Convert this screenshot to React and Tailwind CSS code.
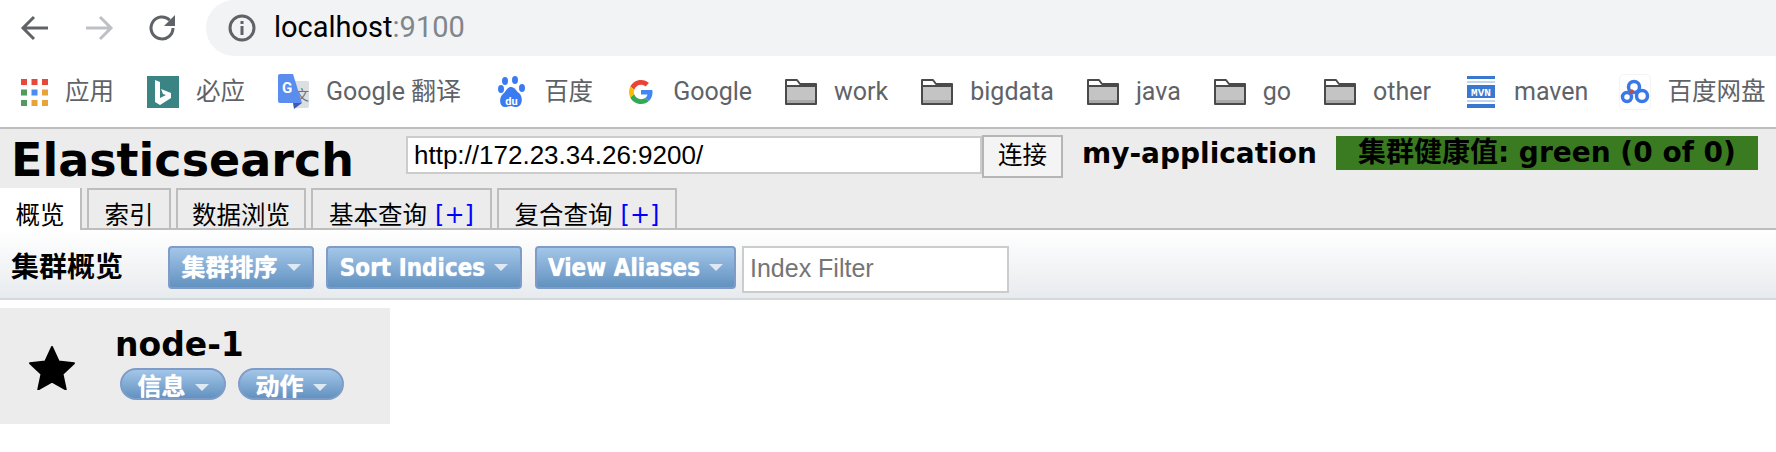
import React from 'react';

const chromeFont = 'font-["Roboto","Noto_Sans_CJK_SC",sans-serif]';
const pageFont = 'font-["Liberation_Sans","Noto_Sans_CJK_SC",sans-serif]';
const boldFont = 'font-["DejaVu_Sans","Noto_Sans_CJK_SC",sans-serif] font-bold';
const buttonFont = 'font-["DejaVu_Sans_Condensed","Noto_Sans_CJK_SC",sans-serif] font-bold';

const Folder = () => (
    <svg width="32" height="28" viewBox="0 0 32 28">
        <path d="M1 26V2h11l3 4h16v20z" fill="#fff" stroke="#4a4a4a" strokeWidth="2" strokeLinejoin="round" />
        <rect x="2" y="9" width="28" height="16" fill="#c4c4c4" />
        <rect x="2" y="22" width="28" height="3" fill="#a8a8a8" />
        <path d="M1 8h30" stroke="#4a4a4a" strokeWidth="2" />
    </svg>
);

const AppsIcon = () => (
    <svg width="27" height="32" viewBox="0 0 27 32">
        {[['#e8483c', '#e8483c', '#e8483c'], ['#4f9a5c', '#4a8df0', '#e8a43a'], ['#4f9a5c', '#e8a43a', '#e8a43a']].map((row, r) =>
            row.map((c, i) => <rect key={`${r}-${i}`} x={i * 10.5} y={3 + r * 10.5} width="6" height="6" fill={c} />)
        )}
    </svg>
);

const BingIcon = () => (
    <svg width="32" height="32" viewBox="0 0 32 32">
        <rect width="32" height="32" fill="#3a8583" />
        <path d="M8 4l5 2v16l6-3-3-1-2-5 10 4v5l-11 7-5-3z" fill="#fff" />
    </svg>
);

const TranslateIcon = () => (
    <svg width="31" height="36" viewBox="0 0 31 36">
        <path d="M12 7h17a2 2 0 0 1 2 2v23a2 2 0 0 1-2 2H16z" fill="#dcdfe2" />
        <text x="17" y="26" fontSize="14" fill="#6a7480" fontFamily="Noto Sans CJK SC">文</text>
        <path d="M2 0h13l9 29H2a2 2 0 0 1-2-2V2a2 2 0 0 1 2-2z" fill="#5b8def" />
        <path d="M15 29h9l-8 6z" fill="#3e58b8" />
        <text x="4" y="19" fontSize="15" fontWeight="700" fill="#fff" fontFamily="Roboto">G</text>
    </svg>
);

const BaiduIcon = () => (
    <svg width="27" height="32" viewBox="0 0 27 32">
        <g fill="#3a7bf2">
            <ellipse cx="7" cy="5" rx="3" ry="4" />
            <ellipse cx="17" cy="4" rx="3" ry="4" />
            <ellipse cx="3" cy="13" rx="3" ry="4" />
            <ellipse cx="24" cy="12" rx="3" ry="4" />
            <path d="M13 11c4 0 5 4 8 6 4 3 4 13-2 14-3 .5-4-1-6-1s-4 1.500-7 1c-5-1-5-10-1-13 3-2 4-7 8-7z" />
        </g>
        <text x="13.500" y="29" textAnchor="middle" fontSize="11" fontWeight="700" fill="#fff" fontFamily="Roboto">du</text>
    </svg>
);

const GoogleIcon = () => (
    <svg width="24" height="28" viewBox="0 0 48 48">
        <path fill="#ea4335" d="M24 9.500c3.500 0 6.700 1.300 9.100 3.500l6.800-6.800C35.800 2.400 30.200 0 24 0 14.600 0 6.500 5.400 2.600 13.200l7.900 6.200C12.400 13.600 17.700 9.500 24 9.500z" />
        <path fill="#4285f4" d="M47 24.500c0-1.600-.2-3.100-.4-4.500H24v9h12.900c-.6 3-2.200 5.500-4.700 7.200l7.700 6C44.400 37.900 47 31.800 47 24.500z" />
        <path fill="#fbbc05" d="M10.500 28.600c-.5-1.400-.8-3-.8-4.600s.3-3.200.8-4.600l-7.900-6.200C.9 16.500 0 20.100 0 24s.9 7.500 2.600 10.800z" />
        <path fill="#34a853" d="M24 48c6.500 0 11.900-2.100 15.900-5.800l-7.700-6c-2.200 1.400-4.900 2.300-8.200 2.300-6.300 0-11.600-4.100-13.500-9.900l-7.900 6.200C6.500 42.600 14.600 48 24 48z" />
    </svg>
);

const MavenIcon = () => (
    <svg width="28" height="32" viewBox="0 0 28 32">
        <rect width="28" height="3" y="0" fill="#3a78d0" />
        <rect width="28" height="2" y="5" fill="#c3d4ee" />
        <rect width="28" height="13" y="9" fill="#3a78d0" />
        <text x="14" y="20" textAnchor="middle" fontSize="11" fontWeight="700" fill="#fff" fontFamily="Liberation Mono">MVN</text>
        <rect width="28" height="2" y="24" fill="#c3d4ee" />
        <rect width="28" height="4" y="28" fill="#3a78d0" />
    </svg>
);

const PanIcon = () => (
    <svg width="32" height="36" viewBox="0 0 32 36">
        <rect x=".5" y=".5" width="31" height="35" rx="4" fill="#fff" stroke="#f3f4f6" />
        <g fill="none" stroke="#3a78e8" strokeWidth="3.500">
            <circle cx="15" cy="13" r="5.500" />
            <circle cx="8" cy="23" r="4.500" />
            <circle cx="23" cy="22" r="5.500" />
        </g>
        <path d="M11 19l3-3" stroke="#d0463a" strokeWidth="3" />
    </svg>
);

const bookmarks = [
    { icon: <AppsIcon />, label: '应用', text: 'text-[24.500px]' },
    { icon: <BingIcon />, label: '必应', text: 'text-[24.500px]' },
    { icon: <TranslateIcon />, label: 'Google 翻译' },
    { icon: <BaiduIcon />, label: '百度', text: 'text-[24.500px]', wrap: 'ml-[4px] gap-[19px]' },
    { icon: <GoogleIcon />, label: 'Google', wrap: 'ml-[3px] gap-[20px]' },
    { icon: <Folder />, label: 'work' },
    { icon: <Folder />, label: 'bigdata' },
    { icon: <Folder />, label: 'java' },
    { icon: <Folder />, label: 'go' },
    { icon: <Folder />, label: 'other' },
    { icon: <MavenIcon />, label: 'maven', wrap: 'ml-[3px] gap-[19px]' },
    { icon: <PanIcon />, label: '百度网盘', text: 'text-[24.500px]', wrap: '-ml-[2px] gap-[16px]' },
];

const Caret = ({ className = '' }) => (
    <span className={`inline-block w-0 h-0 border-x-[7px] border-x-transparent border-t-[7px] border-t-[#dfe9f4] ${className}`} />
);

const MenuButton = ({ label, width, rounded = 'rounded-[4px]', height = 'h-[43px]', textClass = '', caretClass = '' }) => (
    <button className={`${height} ${width} ${rounded} flex items-center justify-center gap-[9px] border-2 border-[#7f9cc9] bg-gradient-to-b from-[#a3c6e8] to-[#6292c0] text-white text-[24px] overflow-hidden ${buttonFont}`}>
        <span className={`[text-shadow:0_0_1px_#ffffff] ${textClass}`}>{label}</span>
        <Caret className={caretClass} />
    </button>
);

const Tab = ({ label, plus, width, active }) => (
    <div className={`${width} flex items-center justify-center gap-[8px] text-[24.500px] leading-[25px] text-black pt-[12px] border-x-2 border-[#bdbdbd] ${active ? 'bg-white border-l-0 h-[42px] -mb-[2px]' : 'h-[40px] border-t-2'}`}>
        <span>{label}</span>
        {plus && <span className='text-[#0000ff] text-[24px] font-["DejaVu_Sans"]'>[+]</span>}
    </div>
);

export default function App() {
    return (
        <div className="w-[1776px] h-[452px] overflow-hidden bg-white flex flex-col">
            {/* browser chrome */}
            <div className={`h-[56px] flex items-center ${chromeFont}`}>
                <div className="w-[206px] flex items-center shrink-0">
                    <svg width="30" height="30" viewBox="0 0 30 30" className="ml-[20px]" fill="none" stroke="#5f6368" strokeWidth="3">
                        <path d="M28 15H3M14 4L3 15l11 11" />
                    </svg>
                    <svg width="30" height="30" viewBox="0 0 30 30" className="ml-[34px]" fill="none" stroke="#bdc1c6" strokeWidth="3">
                        <path d="M2 15h25M16 4l11 11-11 11" />
                    </svg>
                    <svg width="30" height="30" viewBox="0 0 30 30" className="ml-[34px]">
                        <path d="M25 15a11 11 0 1 1-3.200-7.800" fill="none" stroke="#5f6368" strokeWidth="3" />
                        <path d="M27 2v11H16z" fill="#5f6368" />
                    </svg>
                </div>
                <div className="flex-1 h-[56px] bg-[#f1f3f4] rounded-l-[28px] flex items-center pl-[22px]">
                    <svg width="28" height="28" viewBox="0 0 28 28">
                        <circle cx="14" cy="14" r="12" fill="none" stroke="#5f6368" strokeWidth="3" />
                        <rect x="12.500" y="12" width="3" height="9" fill="#5f6368" />
                        <rect x="12.500" y="7" width="3" height="3" fill="#5f6368" />
                    </svg>
                    <span className="ml-[18px] text-[29px] text-black">localhost<span className="text-[#80868b]">:9100</span></span>
                </div>
            </div>
            <div className={`h-[71px] flex items-center gap-[33px] pl-[21px] overflow-hidden whitespace-nowrap text-[#5f6368] text-[25px] ${chromeFont}`}>
                {bookmarks.map((b) => (
                    <div key={b.label} className={`flex items-center shrink-0 ${b.wrap || 'gap-[17px]'}`}>
                        {b.icon}
                        <span className={`pt-[1px] ${b.text || ''}`}>{b.label}</span>
                    </div>
                ))}
            </div>

            {/* head header */}
            <div className={`h-[103px] bg-[#ececec] border-y-2 border-[#bdbdbd] flex flex-col justify-between ${pageFont}`}>
                <div className="flex items-start pl-[11px] pt-[7px]">
                    <h1 className={`w-[395px] -mt-[1px] text-[46px] leading-[50px] text-black shrink-0 ${boldFont}`}>Elasticsearch</h1>
                    <input readOnly value="http://172.23.34.26:9200/" className="w-[576px] h-[38px] bg-white border-2 border-[#cccccc] px-[6px] text-[26px] text-black outline-none" />
                    <button className="w-[81px] h-[43px] -mt-[1px] bg-[#f4f4f4] border-2 border-[#b5b5b5] text-[24.500px] text-black">连接</button>
                    <span className={`ml-[19px] mt-[1px] text-[28px] leading-[34px] text-black whitespace-nowrap ${boldFont}`}>my-application</span>
                    <div className={`ml-[19px] w-[422px] h-[34px] bg-[#3a7b21] flex items-center justify-center text-[28px] text-black whitespace-nowrap ${boldFont}`}>集群健康值: green (0 of 0)</div>
                </div>
                <div className="flex items-end gap-[5px]">
                    <Tab label="概览" width="w-[82px]" active />
                    <Tab label="索引" width="w-[84px]" />
                    <Tab label="数据浏览" width="w-[130px]" />
                    <Tab label="基本查询" plus width="w-[181px]" />
                    <Tab label="复合查询" plus width="w-[180px]" />
                </div>
            </div>

            {/* toolbar */}
            <div className="h-[70px] flex items-center pl-[11px] pt-[7px] bg-gradient-to-b from-white to-[#e8ebee] border-b-2 border-[#d3d8dc]">
                <span className={`w-[157px] text-[28px] text-black shrink-0 ${boldFont}`}>集群概览</span>
                <MenuButton label="集群排序" width="w-[146px]" />
                <div className="w-[12px]" />
                <MenuButton label="Sort Indices" width="w-[196px]" />
                <div className="w-[13px]" />
                <MenuButton label="View Aliases" width="w-[201px]" />
                <input readOnly placeholder="Index Filter" className={`ml-[6px] w-[267px] h-[47px] mt-[4px] pb-[3px] bg-white border-2 border-[#cccccc] px-[6px] text-[25px] placeholder:text-[#757575] outline-none ${pageFont}`} />
            </div>

            {/* node cell */}
            <div className="mt-[8px] w-[390px] h-[116px] bg-[#ececec] flex">
                <div className="w-[115px] flex items-center justify-center pr-[11px] pt-[4px]">
                    <svg width="46" height="44" viewBox="0 0 24 23">
                        <path d="M12 .5l3.500 7.600 8 .9-6 5.600 1.700 8.100L12 18.600l-7.200 4.100 1.700-8.100-6-5.600 8-.9z" fill="#000" stroke="#000" strokeLinejoin="round" />
                    </svg>
                </div>
                <div className="pt-[19px]">
                    <div className={`text-[33px] leading-[36px] text-black ${boldFont}`}>node-1</div>
                    <div className="flex gap-[12px] mt-[5px] ml-[5px]">
                        <MenuButton label="信息" width="w-[106px]" height="h-[32px]" rounded="rounded-full" textClass="pt-[6px] leading-[24px]" caretClass="mt-[6px]" />
                        <MenuButton label="动作" width="w-[106px]" height="h-[32px]" rounded="rounded-full" textClass="pt-[6px] leading-[24px]" caretClass="mt-[6px]" />
                    </div>
                </div>
            </div>
        </div>
    );
}
